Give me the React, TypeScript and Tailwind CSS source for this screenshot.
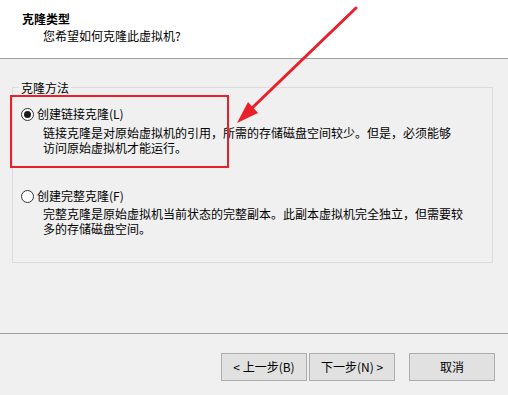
import React from 'react'

const font = { fontFamily: '"Noto Sans CJK SC", "Noto Sans", sans-serif' }

const Radio = ({ checked }: { checked: boolean }) => (
    <span className='w-[13px] h-[13px] rounded-full border border-[#333333] bg-white flex items-center justify-center shrink-0'>
        {checked && <span className='w-[7px] h-[7px] rounded-full bg-[#1a1a1a]' />}
    </span>
)

const Btn = ({ children }: { children: React.ReactNode }) => (
    <button className='w-[86px] h-[28px] bg-[#e1e1e1] border border-[#adadad] text-[12px] leading-[14px] text-black flex items-center justify-center'>
        {children}
    </button>
)

const App = () => {
    return (
        <div className='relative w-[508px] h-[395px] bg-[#f0f0f0] text-black overflow-hidden' style={font}>
            {/* header */}
            <div className='h-[58px] bg-white pl-[22px] pt-[12px]'>
                <div className='text-[12px] leading-[14px] font-bold'>克隆类型</div>
                <div className='text-[12px] leading-[14px] ml-[21px] mt-[3px]'>您希望如何克隆此虚拟机?</div>
            </div>
            <div className='h-px bg-[#a0a0a0]' />

            {/* body */}
            <div className='h-[274px] pt-[28px]'>
                <div className='relative ml-[12px] w-[481px] h-[176px] border border-[#dcdcdc] text-[12px] leading-[14px]'>
                    <span className='absolute left-[6px] -top-[7px] px-[2px] bg-[#f0f0f0]'>克隆方法</span>

                    <div className='pt-[19px] pl-[8px]'>
                        <div className='flex items-center gap-[3px]'>
                            <Radio checked />
                            <span>创建链接克隆(L)</span>
                        </div>
                        <div className='ml-[22px] mt-[4px] leading-[15px]'>
                            <div>链接克隆是对原始虚拟机的引用，所需的存储磁盘空间较少。但是，必须能够</div>
                            <div>访问原始虚拟机才能运行。</div>
                        </div>

                        <div className='flex items-center gap-[3px] mt-[34px]'>
                            <Radio checked={false} />
                            <span>创建完整克隆(F)</span>
                        </div>
                        <div className='ml-[22px] mt-[3px] leading-[15px]'>
                            <div>完整克隆是原始虚拟机当前状态的完整副本。此副本虚拟机完全独立，但需要较</div>
                            <div>多的存储磁盘空间。</div>
                        </div>
                    </div>
                </div>
            </div>
            <div className='h-px bg-[#a0a0a0]' />

            {/* footer */}
            <div className='flex justify-end pr-[13px] pt-[19px]'>
                <Btn>&lt; 上一步(B)</Btn>
                <div className='ml-[2px]'><Btn>下一步(N) &gt;</Btn></div>
                <div className='ml-[14px]'><Btn>取消</Btn></div>
            </div>

            {/* annotation */}
            <div className='absolute left-[10px] top-[95px] w-[219px] h-[73px] border-2 border-[#e8202a] pointer-events-none' />
            <svg className='absolute inset-0 pointer-events-none' width='508' height='395' viewBox='0 0 508 395'>
                <line x1='356' y1='8' x2='251' y2='109' stroke='#e8202a' strokeWidth='3' strokeLinecap='round' />
                <polygon points='237,123 258,113 248,102' fill='#e8202a' />
            </svg>
        </div>
    )
}

export default App
